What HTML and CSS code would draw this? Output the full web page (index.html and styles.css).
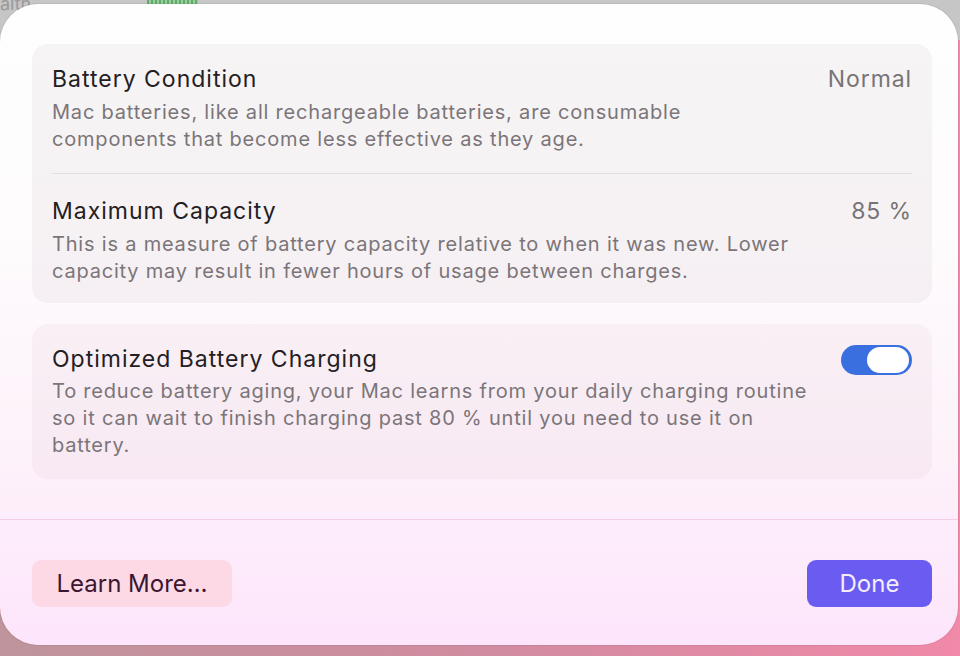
FILE: index.html
```html
<!DOCTYPE html>
<html lang="en">
<head>
<meta charset="utf-8">
<title>Battery Health</title>
<link rel="stylesheet" href="styles.css">
</head>
<body>
<div class="backdrop-top">
  <span class="peek-text">alth</span>
  <span class="peek-bars"></span>
</div>
<main class="sheet">
  <div class="content">
    <section class="card">
      <div class="row">
        <div class="row-head">
          <h2 class="title">Battery Condition</h2>
          <span class="value">Normal</span>
        </div>
        <p class="desc">Mac batteries, like all rechargeable batteries, are consumable<br>components that become less effective as they age.</p>
      </div>
      <div class="divider"></div>
      <div class="row row-second">
        <div class="row-head">
          <h2 class="title">Maximum Capacity</h2>
          <span class="value">85 %</span>
        </div>
        <p class="desc">This is a measure of battery capacity relative to when it was new. Lower<br>capacity may result in fewer hours of usage between charges.</p>
      </div>
    </section>
    <section class="card card-pink">
      <div class="row row-toggle">
        <div class="row-head">
          <h2 class="title">Optimized Battery Charging</h2>
          <span class="toggle"><span class="knob"></span></span>
        </div>
        <p class="desc">To reduce battery aging, your Mac learns from your daily charging routine<br>so it can wait to finish charging past 80 % until you need to use it on<br>battery.</p>
      </div>
    </section>
  </div>
  <footer class="footer">
    <button class="btn btn-secondary">Learn More…</button>
    <button class="btn btn-primary">Done</button>
  </footer>
</main>
</body>
</html>
```
FILE: styles.css
```css
* { box-sizing: border-box; }
html, body { margin: 0; padding: 0; }
body {
  width: 960px;
  height: 656px;
  overflow: hidden;
  font-family: Inter, "Noto Sans", "Liberation Sans", sans-serif;
  background: linear-gradient(90deg, #bf949c 0%, #d08ca0 50%, #f189a9 100%);
  display: flex;
  flex-direction: column;
  position: relative;
}
.backdrop-top {
  position: absolute;
  top: 0; left: 0; right: 0;
  height: 40px;
  background: #c6c6c6;
}
.peek-text {
  position: absolute;
  left: 0; top: -6px;
  font-size: 18px;
  line-height: 20px;
  color: #9a9a9a;
}
.peek-bars {
  position: absolute;
  left: 147px; top: 0;
  width: 51px; height: 4px;
  background: repeating-linear-gradient(90deg, #5fae6a 0 2px, #9acb9f 2px 4px);
}
.sheet {
  position: relative;
  margin: 4px 2px 0 0;
  height: 641px;
  border-radius: 38px;
  background: linear-gradient(180deg, #fefefe 0%, #fefcfd 35%, #fdf2fa 70%, #fde5fb 100%);
  display: flex;
  flex-direction: column;
  overflow: hidden;
  box-shadow: 0 0 0 1px rgba(0,0,0,0.06);
}
.content {
  padding: 40px 26px 0 32px;
  display: flex;
  flex-direction: column;
  gap: 21px;
  height: 516px;
  border-bottom: 1px solid #f6cde6;
}
.card {
  width: 900px;
  border-radius: 16px;
  background: rgba(110, 80, 90, 0.055);
  padding: 0 20px;
}
.card-pink {
  background: rgba(150, 70, 100, 0.045);
}
.row { padding: 22px 0 20px; }
.row-second { padding: 24px 0 18px; }
.row-toggle { padding: 22px 0 20px; }
.row-head {
  display: flex;
  justify-content: space-between;
  align-items: center;
  height: 27px;
}
.title {
  margin: 0;
  font-size: 23px;
  font-weight: 400;
  line-height: 27px;
  letter-spacing: 1px;
  color: #232023;
}
.value {
  font-size: 23px;
  line-height: 27px;
  letter-spacing: 0.9px;
  color: #777476;
}
.desc {
  margin: 6px 0 0;
  font-size: 20px;
  line-height: 27px;
  letter-spacing: 0.8px;
  color: #7b7579;
}
.row-toggle .desc { margin-top: 5px; }
.divider {
  height: 1px;
  background: #e3dfe1;
}
.toggle {
  width: 71px;
  height: 30px;
  border-radius: 15px;
  background: #3a6fe0;
  display: flex;
  align-items: center;
  justify-content: flex-end;
  padding: 0 3px;
  flex-shrink: 0;
}
.knob {
  width: 42px;
  height: 26px;
  border-radius: 13px;
  background: #ffffff;
}
.footer {
  flex: 1;
  display: flex;
  justify-content: space-between;
  align-items: flex-start;
  padding: 40px 26px 0 32px;
}
.btn {
  height: 47px;
  border: 0;
  border-radius: 9px;
  font-family: inherit;
  font-size: 24px;
  line-height: 47px;
  padding: 0;
}
.btn-secondary {
  width: 200px;
  background: #fdd9e6;
  color: #3a1630;
}
.btn-primary {
  width: 125px;
  background: #6a5cf1;
  color: #f6ecff;
}
```
